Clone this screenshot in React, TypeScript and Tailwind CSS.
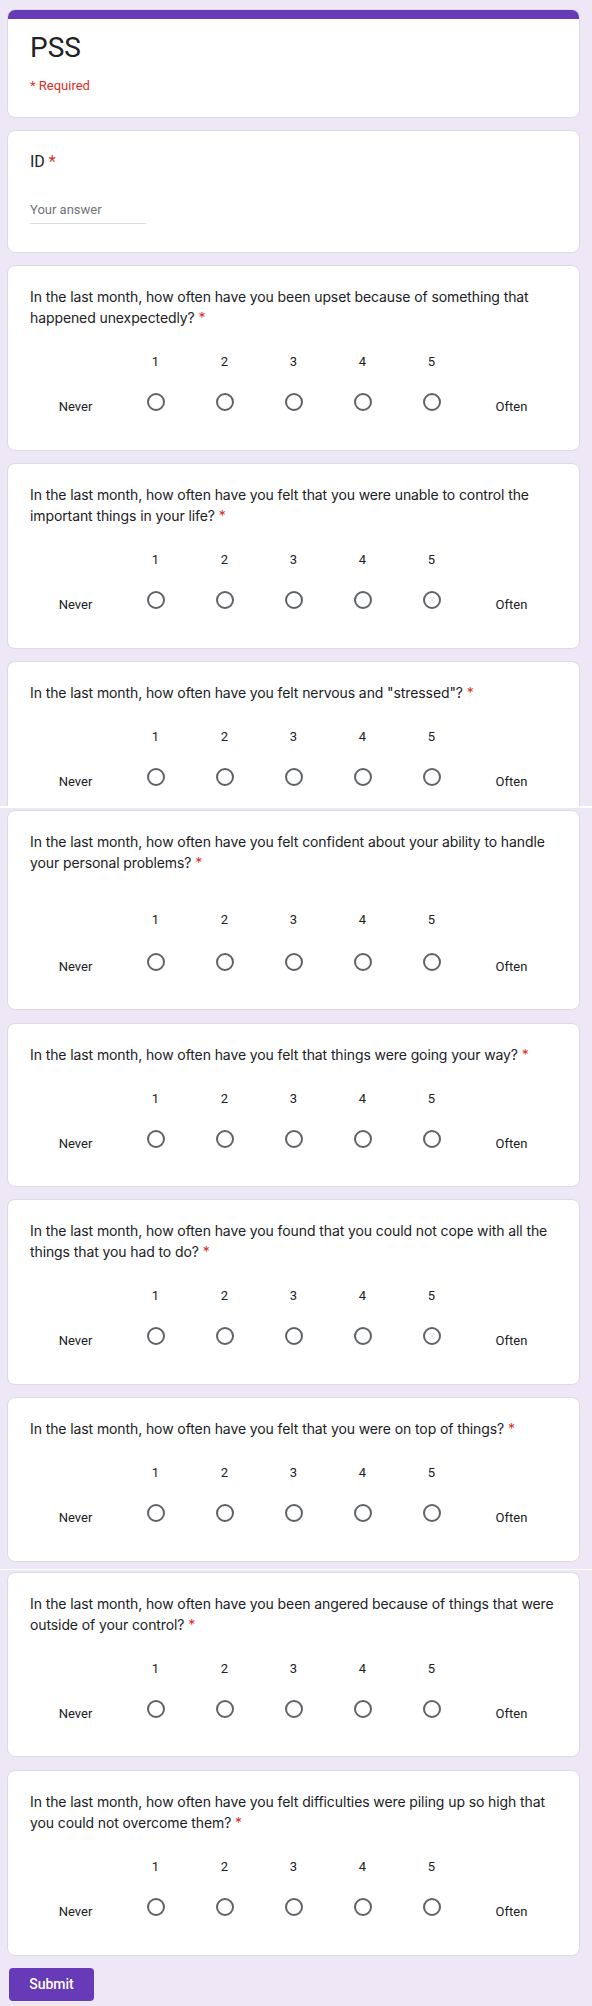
import React from "react";

const ROBOTO = { fontFamily: "Roboto, 'Liberation Sans', sans-serif" };

function Star() {
  return <span className="text-[#d93025]"> *</span>;
}

function Radio() {
  return <div className="mt-px w-[18px] h-[18px] rounded-full border-2 border-[#5f6368] bg-white" />;
}

function Scale({ numMt, radioMt }: { numMt: string; radioMt: string }) {
  return (
    <div className="text-[13px] leading-[20px] text-[#202124]" style={ROBOTO}>
      <div className={`flex ${numMt}`}>
        <div className="w-[91px]" />
        {[1, 2, 3, 4, 5].map((n) => (
          <div key={n} className="w-[69px] text-center">
            {n}
          </div>
        ))}
        <div className="w-[91px]" />
      </div>
      <div className={`flex items-start ${radioMt}`}>
        <div className="w-[91px] text-center pt-[5px]">Never</div>
        {[1, 2, 3, 4, 5].map((n) => (
          <div key={n} className="w-[69px] h-5 flex justify-center">
            <Radio />
          </div>
        ))}
        <div className="w-[91px] text-center pt-[5px]">Often</div>
      </div>
    </div>
  );
}

type QProps = {
  lines: string[];
  mt: string;
  pb: string;
  numMt?: string;
  radioMt?: string;
  cut?: boolean;
};

function Question({ lines, mt, pb, numMt = "mt-[24px]", radioMt = "mt-[20px]", cut }: QProps) {
  return (
    <div
      className={`${mt} ml-[7px] w-[573px] bg-white border border-[#dadce0] px-[22px] pt-[20px] ${pb} ${
        cut ? "rounded-t-lg border-b-0" : "rounded-lg"
      }`}
    >
      <div
        className="text-[14px] leading-[21px] tracking-[-0.1px] text-[#202124]"
        style={{ fontFamily: "Inter, 'Noto Sans', sans-serif" }}
      >
        {lines.map((l, i) => (
          <div key={i} className="whitespace-nowrap">
            {l}
            {i === lines.length - 1 && <Star />}
          </div>
        ))}
      </div>
      <Scale numMt={numMt} radioMt={radioMt} />
    </div>
  );
}

export default function App() {
  return (
    <div className="w-[592px] min-h-[2006px] bg-[#ede7f6] pt-[9px] pb-[5px] flex flex-col">
      {/* Header */}
      <div className="ml-[7px] w-[573px] h-[109px] bg-white rounded-lg border border-[#dadce0] overflow-hidden flex flex-col">
        <div className="h-[10px] bg-[#673ab7] -mx-px -mt-px" />
        <div className="px-[22px] pt-[11px]" style={ROBOTO}>
          <div className="text-[28px] leading-[36px] text-[#202124]">PSS</div>
          <div className="mt-[10px] text-[13px] leading-[20px] text-[#d93025]">* Required</div>
        </div>
      </div>

      {/* ID */}
      <div className="mt-[12px] ml-[7px] w-[573px] h-[123px] bg-white rounded-lg border border-[#dadce0] px-[22px] pt-[20px]" style={ROBOTO}>
        <div className="text-[16px] leading-[21px] text-[#202124]">
          ID<Star />
        </div>
        <div className="mt-[28px] w-[116px] pb-[3px] border-b border-[#dadce0] text-[13px] leading-[20px] text-[#70757a]">
          Your answer
        </div>
      </div>

      <Question
        mt="mt-[12px]"
        pb="pb-[33px]"
        lines={[
          "In the last month, how often have you been upset because of something that",
          "happened unexpectedly?",
        ]}
      />
      <Question
        mt="mt-[12px]"
        pb="pb-[33px]"
        lines={[
          "In the last month, how often have you felt that you were unable to control the",
          "important things in your life?",
        ]}
      />
      <Question
        mt="mt-[12px]"
        pb="pb-[14px]"
        cut
        lines={['In the last month, how often have you felt nervous and "stressed"?']}
      />
      <div className="h-[2px] w-full bg-white" />
      <Question
        mt="mt-[2px]"
        pb="pb-[32px]"
        numMt="mt-[37px]"
        radioMt="mt-[22px]"
        lines={[
          "In the last month, how often have you felt confident about your ability to handle",
          "your personal problems?",
        ]}
      />
      <Question
        mt="mt-[13px]"
        pb="pb-[32px]"
        lines={["In the last month, how often have you felt that things were going your way?"]}
      />
      <Question
        mt="mt-[12px]"
        pb="pb-[33px]"
        lines={[
          "In the last month, how often have you found that you could not cope with all the",
          "things that you had to do?",
        ]}
      />
      <Question
        mt="mt-[12px]"
        pb="pb-[33px]"
        lines={["In the last month, how often have you felt that you were on top of things?"]}
      />
      <div className="mt-[7px] h-px w-full bg-white" />
      <Question
        mt="mt-[2px]"
        pb="pb-[32px]"
        lines={[
          "In the last month, how often have you been angered because of things that were",
          "outside of your control?",
        ]}
      />
      <Question
        mt="mt-[13px]"
        pb="pb-[33px]"
        lines={[
          "In the last month, how often have you felt difficulties were piling up so high that",
          "you could not overcome them?",
        ]}
      />

      <div className="mt-[12px] ml-[9px]">
        <button
          className="w-[85px] h-[33px] rounded-[4px] bg-[#673ab7] text-white text-[14px] font-medium"
          style={ROBOTO}
        >
          Submit
        </button>
      </div>
    </div>
  );
}
